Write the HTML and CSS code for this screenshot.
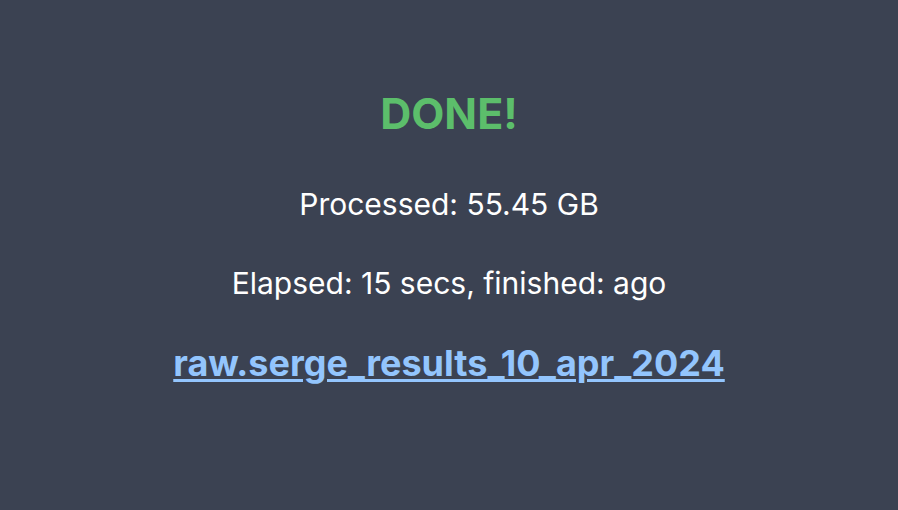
FILE: index.html
```html
<!DOCTYPE html>
<html>
<head>
<meta charset="utf-8">
<link rel="stylesheet" href="styles.css">
</head>
<body>
<main class="status">
  <h1 class="done">DONE!</h1>
  <p class="line">Processed: 55.45 GB</p>
  <p class="line">Elapsed: 15 secs, finished: ago</p>
  <a class="table-link" href="#">raw.serge_results_10_apr_2024</a>
</main>
</body>
</html>
```
FILE: styles.css
```css
html, body {
  margin: 0;
  padding: 0;
  height: 100%;
}
body {
  background: #3b4252;
  font-family: Inter, "Noto Sans", sans-serif;
  color: #ffffff;
}
.status {
  display: flex;
  flex-direction: column;
  align-items: center;
  padding-top: 87px;
}
.done {
  margin: 0;
  font-size: 43px;
  font-weight: 700;
  color: #5cbe6b;
  line-height: 52px;
}
.line {
  margin: 0;
  font-size: 30px;
  line-height: 36px;
  margin-top: 47px;
}
.line + .line {
  margin-top: 43px;
}
.table-link {
  margin-top: 40px;
  font-size: 36px;
  font-weight: 700;
  line-height: 44px;
  color: #93c5fd;
  text-decoration: underline;
  text-decoration-thickness: 3px;
  text-underline-offset: 3px;
}
```
